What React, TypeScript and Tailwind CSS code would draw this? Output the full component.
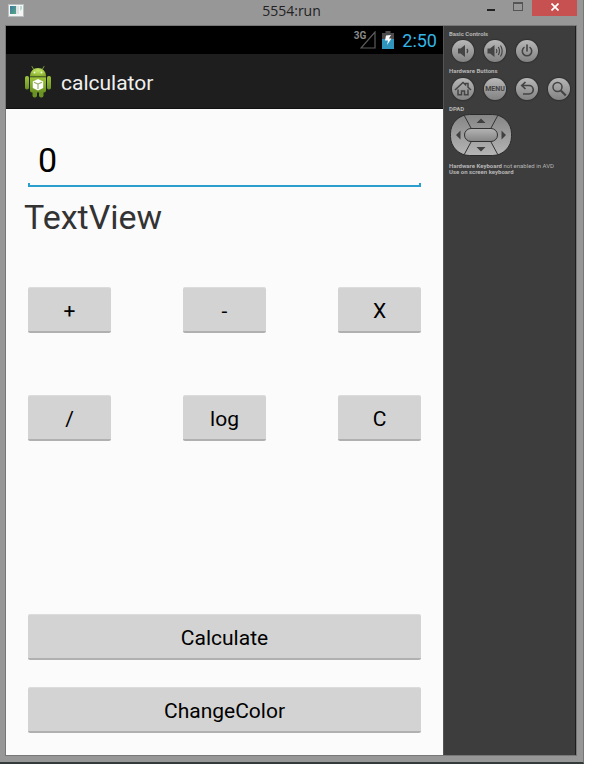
import React, { useState } from 'react';

type Operator = '+' | '-' | 'X' | '/' | 'log' | 'C';

const OPERATORS: Operator[] = ['+', '-', 'X', '/', 'log', 'C'];

const PAD_BUTTON =
  'h-[46px] rounded-[2px] border-t border-b-2 border-t-[#dcdcdc] border-b-[#b0b0b0] bg-[#d3d3d3] pt-[2px] text-[21px] leading-6 text-black';

function WindowIcon() {
  return (
    <svg viewBox="0 0 16 13" className="h-[13px] w-4" aria-hidden="true">
      <defs>
        <linearGradient id="pane" x1="0" y1="0" x2="1" y2="1">
          <stop offset="0" stopColor="#3d78a0" />
          <stop offset="1" stopColor="#55a886" />
        </linearGradient>
      </defs>
      <rect x="0.5" y="0.5" width="15" height="12" fill="#f4f6f6" stroke="#b9bfc0" />
      <rect x="2" y="2" width="6" height="8" fill="url(#pane)" />
      <rect x="8" y="2" width="3" height="8" fill="#dfe3e3" />
      <path d="M12 2h2v3l-2 2z" fill="#b9dccf" />
    </svg>
  );
}

function AndroidIcon() {
  return (
    <svg viewBox="0 0 28 33" className="h-[33px] w-7" aria-hidden="true">
      <defs>
        <linearGradient id="robot" x1="0" y1="0" x2="0" y2="1">
          <stop offset="0" stopColor="#9dc43a" />
          <stop offset="1" stopColor="#6a9222" />
        </linearGradient>
        <radialGradient id="head" cx="0.5" cy="0.3" r="0.7">
          <stop offset="0" stopColor="#c5e567" />
          <stop offset="1" stopColor="#86ad2c" />
        </radialGradient>
      </defs>
      <path d="M9.500 4 8 1.500M18.500 4 20 1.500" stroke="#7d9f35" strokeLinecap="round" />
      <path d="M6 11.500c0-5.500 3.500-8.500 8-8.500s8 3 8 8.500z" fill="url(#head)" />
      <circle cx="10.500" cy="7.500" r="0.900" fill="#f3f8dc" />
      <circle cx="17.500" cy="7.500" r="0.900" fill="#f3f8dc" />
      <rect x="1" y="11" width="4" height="13.500" rx="1.800" fill="url(#robot)" />
      <rect x="23" y="11" width="4" height="13.500" rx="1.800" fill="url(#robot)" />
      <rect x="8.500" y="24" width="4.500" height="8.500" rx="2" fill="#6a9222" />
      <rect x="15" y="24" width="4.500" height="8.500" rx="2" fill="#6a9222" />
      <path d="M6 12.300h16v13.200a2 2 0 0 1-2 2H8a2 2 0 0 1-2-2z" fill="url(#robot)" />
      <path d="m14 14 5.200 2.500v6.500L14 25.500 8.800 23v-6.500z" fill="#fff" />
      <path d="m10 17.300 4 1.700 4-1.700M14 19v5" fill="none" stroke="#9bae6c" strokeWidth="1.200" />
    </svg>
  );
}

function SignalIcon() {
  return (
    <svg viewBox="0 0 16 18" className="h-[18px] w-4" aria-hidden="true">
      <path d="M15 1v16H1z" fill="none" stroke="#5c5c5c" strokeWidth="1.200" />
    </svg>
  );
}

function BatteryIcon() {
  return (
    <svg viewBox="0 0 12 18" className="h-[18px] w-3" aria-hidden="true">
      <path d="M3.500 0h5v2H12v7H0V2h3.500z" fill="#4c4c4c" />
      <path d="M0 8h12v10H0z" fill="#2f95bf" />
      <path d="m4 4.500 5-0.500-2 3.500h2.500L5 14l1-4.500H3z" fill="#fff" />
    </svg>
  );
}

function SpeakerLow() {
  return (
    <svg viewBox="0 0 22 22" className="size-full" aria-hidden="true">
      <path d="M6 8.500h2.500L13 5v12l-4.500-3.500H6z" fill="#444" />
      <path d="M15 9q1.400 2 0 4" fill="none" stroke="#444" strokeWidth="1.400" />
    </svg>
  );
}

function SpeakerHigh() {
  return (
    <svg viewBox="0 0 22 22" className="size-full" aria-hidden="true">
      <path d="M3.500 8.500H6L10.500 5v12L6 13.500H3.500z" fill="#444" />
      <path d="M12.300 9q1.300 2 0 4M14.300 7q2.400 4 0 8M16.500 5.500q3.400 5.500 0 11" fill="none" stroke="#444" strokeWidth="1.200" />
    </svg>
  );
}

function PowerGlyph() {
  return (
    <svg viewBox="0 0 22 22" className="size-full" aria-hidden="true">
      <path d="M8 7.500a4.700 4.700 0 1 0 6 0M11 5v6" fill="none" stroke="#444" strokeWidth="1.600" strokeLinecap="round" />
    </svg>
  );
}

function HomeGlyph() {
  return (
    <svg viewBox="0 0 22 22" className="size-full" aria-hidden="true">
      <path d="M3 12 11 4.500l2.500 2.300V5.500h2.500v3.700L19 12M6 11.500v5.200h3.500V13h3v3.700H16v-5.200" fill="none" stroke="#444" strokeWidth="1.500" />
    </svg>
  );
}

function BackGlyph() {
  return (
    <svg viewBox="0 0 22 22" className="size-full" aria-hidden="true">
      <path d="M9.500 4 5.800 7.500 9.500 11M6.500 7.500H13a4.200 4.200 0 0 1 0 8.500H7" fill="none" stroke="#444" strokeWidth="1.700" />
    </svg>
  );
}

function SearchGlyph() {
  return (
    <svg viewBox="0 0 22 22" className="size-full" aria-hidden="true">
      <circle cx="9.500" cy="9" r="4.500" fill="none" stroke="#444" strokeWidth="1.500" />
      <path d="m12.800 12.500 5 5" stroke="#444" strokeWidth="2.200" />
    </svg>
  );
}

function DPad() {
  return (
    <svg viewBox="0 0 62 42" className="h-[42px] w-[62px]" role="img" aria-label="Directional pad">
      <defs>
        <linearGradient id="dpad" x1="0" y1="0" x2="0" y2="1">
          <stop offset="0" stopColor="#858585" />
          <stop offset="1" stopColor="#b5b5b5" />
        </linearGradient>
        <linearGradient id="dcenter" x1="0" y1="0" x2="0" y2="1">
          <stop offset="0" stopColor="#b4b4b4" />
          <stop offset="1" stopColor="#848484" />
        </linearGradient>
      </defs>
      <rect x="0.500" y="0.500" width="61" height="41" rx="19" fill="url(#dpad)" stroke="#2b2b2b" />
      <path d="m14.500 2 6.500 12M47.500 2 41 14M14.500 40 21 28M47.500 40 41 28" stroke="#333" />
      <rect x="14.500" y="14.500" width="33" height="13" rx="6.500" fill="url(#dcenter)" stroke="#303030" />
      <path d="m31 4.500 4.500 4.500h-9zM31 37.500l4.500-4.500h-9zM6 21l4.500-4.500v9zM56 21l-4.500-4.500v9z" fill="#404040" />
    </svg>
  );
}

interface RoundKeyProps {
  label: string;
  children: React.ReactNode;
}

function RoundKey({ label, children }: RoundKeyProps) {
  return (
    <button
      type="button"
      aria-label={label}
      className="flex size-[22px] items-center justify-center rounded-full bg-gradient-to-b from-[#b8b8b8] to-[#828282] text-[7px] leading-none font-bold text-[#444] shadow-[0_0_1px_1px_#303030]"
    >
      {children}
    </button>
  );
}

function TitleBar() {
  return (
    <header className="grid h-[25px] grid-cols-[1fr_auto_1fr] items-start">
      <div className="pt-1 pl-2">
        <WindowIcon />
      </div>
      <h1 className="pt-px font-['Open_Sans',sans-serif] text-[14px] leading-5 text-[#222]">5554:run</h1>
      <div className="flex justify-end pr-[6px]">
        <button type="button" aria-label="Minimize" className="flex h-4 w-[26px] items-end justify-center pb-[5px]">
          <span className="h-[2px] w-2 bg-[#222]" />
        </button>
        <button type="button" aria-label="Maximize" className="flex h-4 w-7 items-start justify-center pt-[2px]">
          <span className="h-[9px] w-[10px] border border-t-2 border-[#555]" />
        </button>
        <button type="button" aria-label="Close" className="flex h-4 w-[45px] items-center justify-center bg-[#c75050] pb-[2px] text-white">
          <svg viewBox="0 0 8 8" className="size-2" aria-hidden="true">
            <path d="m0.500 0.500 7 7M7.500 0.500l-7 7" stroke="currentColor" strokeWidth="1.700" />
          </svg>
        </button>
      </div>
    </header>
  );
}

function StatusBar() {
  return (
    <div className="flex h-7 items-center justify-end bg-black pr-[6px]">
      <span className="self-start pt-1 text-[10px] leading-3 font-bold text-[#8a8a8a]">3G</span>
      <div className="-ml-[6px]">
        <SignalIcon />
      </div>
      <div className="ml-[6px]">
        <BatteryIcon />
      </div>
      <time className="ml-2 pt-px text-[18px] leading-6 text-[#33b5e5]">2:50</time>
    </div>
  );
}

function HardwarePanel() {
  return (
    <aside className="flex w-[133px] shrink-0 flex-col border-r border-l border-r-[#1e1e1e] border-l-[#555] bg-[#3d3d3d] pt-[5px] pl-[5px] text-[6px] leading-[6px] text-[#b5b5b5]">
      <h2 className="font-bold">Basic Controls</h2>
      <div className="mt-[3px] flex gap-[10px] pl-[3px]">
        <RoundKey label="Volume down"><SpeakerLow /></RoundKey>
        <RoundKey label="Volume up"><SpeakerHigh /></RoundKey>
        <RoundKey label="Power"><PowerGlyph /></RoundKey>
      </div>
      <h2 className="mt-[6px] font-bold">Hardware Buttons</h2>
      <div className="mt-1 flex gap-[10px] pl-[3px]">
        <RoundKey label="Home"><HomeGlyph /></RoundKey>
        <RoundKey label="Menu">MENU</RoundKey>
        <RoundKey label="Back"><BackGlyph /></RoundKey>
        <RoundKey label="Search"><SearchGlyph /></RoundKey>
      </div>
      <h2 className="mt-[6px] font-bold">DPAD</h2>
      <div className="mt-[2px] pl-px">
        <DPad />
      </div>
      <p className="mt-[7px]">
        <b>Hardware Keyboard</b> not enabled in AVD
        <br />
        <b>Use on screen keyboard</b>
      </p>
    </aside>
  );
}

export default function App() {
  const [value, setValue] = useState('0');

  const handleOperator = (op: Operator) => {
    if (op === 'C') {
      setValue('0');
    }
  };

  return (
    <div className="flex min-h-screen flex-col bg-white pr-[6px] pb-[6px] font-['Roboto',sans-serif]">
      {/* Emulator window */}
      <div className="flex flex-1 flex-col border-r border-b-2 border-r-[#777] border-b-[#333a3a] bg-[#979797]">
        <TitleBar />
        <div className="mr-[6px] mb-[6px] ml-[5px] flex flex-1 border border-[#777]">
          {/* Device screen */}
          <main className="flex min-w-0 flex-1 flex-col bg-[#fbfbfb]">
            <StatusBar />
            <div className="flex h-[55px] items-center border-b border-[#111] bg-[#1e1e1e] pl-[18px]">
              <AndroidIcon />
              <h2 className="ml-[9px] pt-[3px] text-[21px] leading-6 text-[#f0f0f0]">calculator</h2>
            </div>

            <div className="flex flex-1 flex-col px-[22px] pb-[22px]">
              <div className="mt-6">
                <input
                  type="text"
                  aria-label="Number"
                  value={value}
                  onChange={(e) => setValue(e.target.value)}
                  className="block h-[50px] w-full px-[10px] pt-1 text-[34px] leading-10 text-black outline-none"
                />
                <div className="h-1 border-x-2 border-b-2 border-[#2a9fce]" />
              </div>
              <p className="-ml-1 mt-[10px] text-[34px] leading-10 text-[#333]">TextView</p>

              <div className="mt-[50px] grid grid-cols-[83px_83px_83px] justify-between gap-y-[62px]">
                {OPERATORS.map((op) => (
                  <button key={op} type="button" onClick={() => handleOperator(op)} className={PAD_BUTTON}>
                    {op}
                  </button>
                ))}
              </div>

              <div className="mt-auto flex flex-col gap-[27px]">
                <button type="button" className={PAD_BUTTON}>Calculate</button>
                <button type="button" className={PAD_BUTTON}>ChangeColor</button>
              </div>
            </div>
          </main>
          <HardwarePanel />
        </div>
      </div>
    </div>
  );
}
